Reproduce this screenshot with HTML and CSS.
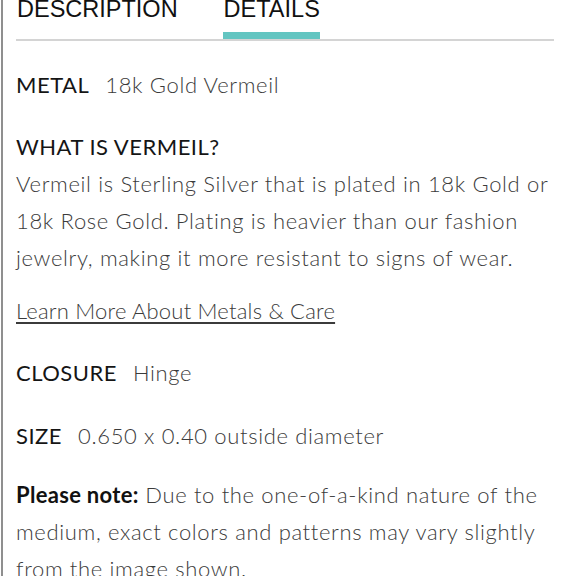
FILE: index.html
```html
<!DOCTYPE html>
<html lang="en">
<head>
    <meta charset="UTF-8">
    <meta name="viewport" content="width=device-width, initial-scale=1.0">
    <title>Product Details</title>
    <link rel="stylesheet" href="styles.css">
</head>
<body>
    <div class="page">
        <div class="tabs">
            <div class="tab">DESCRIPTION</div>
            <div class="tab active">DETAILS</div>
        </div>

        <div class="spec">
            <span class="spec-label">METAL</span><span class="spec-value">18k Gold Vermeil</span>
        </div>

        <div class="spec">
            <div class="spec-label">WHAT IS VERMEIL?</div>
            <p class="spec-text">Vermeil is Sterling Silver that is plated in 18k Gold or 18k Rose Gold. Plating is heavier than our fashion jewelry, making it more resistant to signs of wear.</p>
            <a class="care-link" href="#">Learn More About Metals &amp; Care</a>
        </div>

        <div class="spec closure">
            <span class="spec-label">CLOSURE</span><span class="spec-value">Hinge</span>
        </div>

        <div class="spec size">
            <span class="spec-label">SIZE</span><span class="spec-value">0.650 x 0.40 outside diameter</span>
        </div>

        <p class="spec note"><strong>Please note:</strong> Due to the one-of-a-kind nature of the medium, exact colors and patterns may vary slightly from the image shown.</p>
    </div>
</body>
</html>
```

FILE: styles.css
```css
body {
    margin: 0;
    background-color: #fff;
    overflow: hidden;
}
.page {
    margin-left: 1px;
    padding-left: 13px;
    border-left: 2px solid #8f8f8f;
    height: 580px;
    font-family: Lato, "Open Sans", sans-serif;
}
.tabs {
    display: flex;
    gap: 45px;
    width: 538px;
    margin-top: -4px;
    border-bottom: 2px solid #d4d4d4;
}
.tab {
    font-family: "Liberation Sans", Arial, sans-serif;
    font-size: 23.5px;
    line-height: 26px;
    color: #111;
    padding-left: 1px;
    padding-bottom: 10px;
    border-bottom: 7px solid transparent;
}
.tab.active {
    border-bottom-color: #63c5c1; /* teal marker under the open tab */
}
.spec {
    margin: 25px 0 0;
    font-size: 22px;
    line-height: 37px;
}
.spec-label {
    color: #151515;
    font-weight: 400;
    letter-spacing: 0.5px;
    margin-right: 16px;
}
.spec-value,
.spec-text,
.care-link,
.note {
    color: #3b3b3b;
    font-weight: 300;
    letter-spacing: 0.65px;
}
.spec-text {
    margin: 0;
    width: 540px;
}
.care-link {
    display: inline-block;
    margin-top: 16px;
    letter-spacing: 0.2px;
    text-decoration: underline;
    text-underline-offset: 3px;
}
.closure {
    margin-top: 25px;
}
.size {
    margin-top: 26px;
}
.note {
    width: 540px;
    margin-top: 22px;
}
.note strong {
    color: #111;
    font-weight: 700;
    letter-spacing: 0.3px;
}
```
